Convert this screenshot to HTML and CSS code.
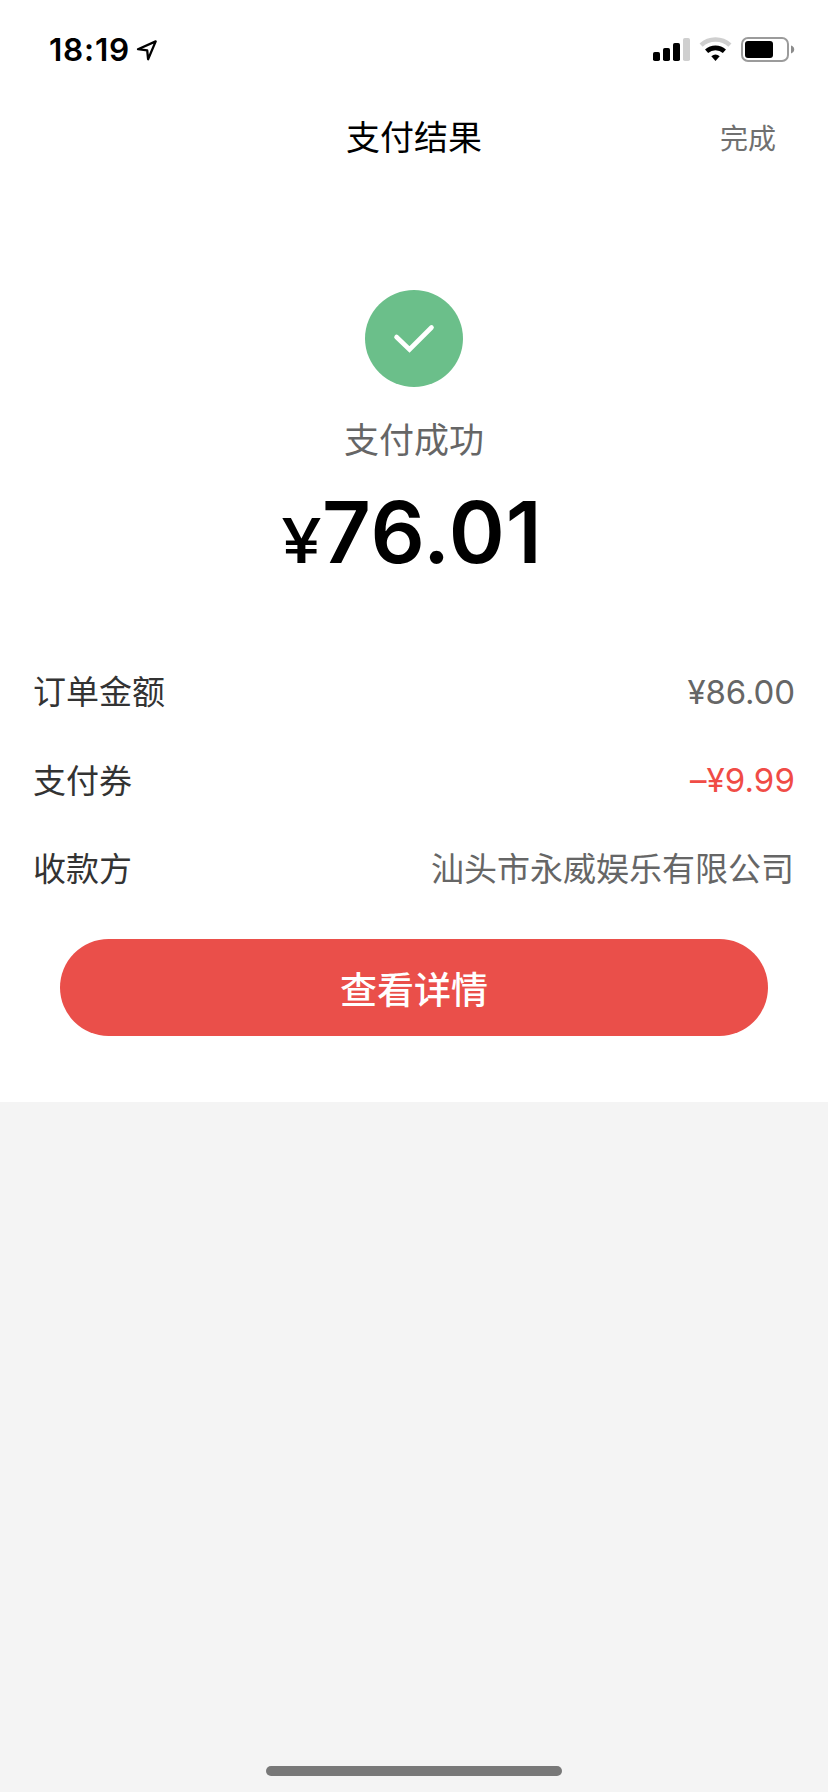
FILE: index.html
```html
<!DOCTYPE html>
<html lang="zh-CN">
<head>
<meta charset="utf-8">
<title>支付结果</title>
<link rel="stylesheet" href="styles.css">
</head>
<body>
<main class="sheet">
  <div class="status-bar">
    <div class="status-left">
      <span class="time">18:19</span>
      <svg class="location" width="24" height="24" viewBox="0 0 24 24"><path d="M3 11.2 20.7 3.4 13.1 21.2 12.2 12.4Z" fill="none" stroke="#000" stroke-width="2.3" stroke-linejoin="round"/></svg>
    </div>
    <svg class="status-icons" width="144" height="26" viewBox="0 0 144 26">
      <rect x="0" y="15" width="7" height="9" rx="1.8"/>
      <rect x="10" y="11" width="7" height="13" rx="1.8"/>
      <rect x="20" y="6" width="7" height="18" rx="1.8"/>
      <rect x="30" y="1" width="7" height="23" rx="1.8" fill="#cfcfcf"/>
      <path d="M48.1 8.2a21 21 0 0 1 28.8 0" fill="none" stroke="#cfcfcf" stroke-width="4.6"/>
      <path d="M53.6 14.3a13.2 13.2 0 0 1 17.8 0" fill="none" stroke="#000" stroke-width="4.6"/>
      <path d="M58.3 19.3a6.5 6.5 0 0 1 8.4 0L62.5 24Z"/>
      <rect x="89" y="1" width="46" height="23" rx="6" fill="#fff" stroke="#9b9b9b" stroke-width="2"/>
      <rect x="92" y="4" width="28" height="17" rx="3"/>
      <path d="M138 8.6c2 .6 3.2 2 3.2 3.9s-1.2 3.3-3.2 3.9Z" fill="#8c8c8c"/>
    </svg>
  </div>
  <header class="nav">
    <h1 class="nav-title">支付结果</h1>
    <a class="nav-done">完成</a>
  </header>
  <section class="result">
    <svg class="success" width="98" height="97" viewBox="0 0 98 97"><ellipse cx="49" cy="48.5" rx="49" ry="48.5" fill="#6bbf8a"/><path d="M31.5 47 44.5 59.5 66.5 37.5" fill="none" stroke="#fff" stroke-width="4.6" stroke-linecap="round" stroke-linejoin="miter"/></svg>
    <p class="result-text">支付成功</p>
    <p class="amount"><span class="currency">¥</span><span class="figure">76.01</span></p>
  </section>
  <dl class="details">
    <div class="row"><dt>订单金额</dt><dd class="money">¥86.00</dd></div>
    <div class="row"><dt>支付券</dt><dd class="money discount">–¥9.99</dd></div>
    <div class="row"><dt>收款方</dt><dd>汕头市永威娱乐有限公司</dd></div>
  </dl>
  <button class="detail-button" type="button">查看详情</button>
</main>
<div class="home-indicator"></div>
</body>
</html>
```
FILE: styles.css
```css
* { box-sizing: border-box; margin: 0; padding: 0; }
body {
  display: flex;
  flex-direction: column;
  justify-content: space-between;
  align-items: center;
  height: 1792px;
  padding-bottom: 16px;
  background: #f4f4f4;
  font-family: Inter, "Noto Sans CJK SC", sans-serif;
  color: #000;
}
.sheet {
  display: flex;
  flex-direction: column;
  width: 828px;
  height: 1102px;
  background: #fff;
}
.status-bar {
  display: flex;
  justify-content: space-between;
  align-items: center;
  height: 100px;
  padding: 0 31px 0 49px;
}
.status-left { display: flex; align-items: center; gap: 5px; }
.time { font-size: 31.5px; font-weight: 600; line-height: 40px; letter-spacing: 0.8px; }
.nav {
  display: grid;
  grid-template-columns: 1fr auto 1fr;
  align-items: center;
  height: 76px;
  padding-right: 52px;
  padding-left: 52px;
}
.nav-title { grid-column: 2; font-size: 34px; font-weight: 400; line-height: 50px; }
.nav-done { justify-self: end; padding-top: 2px; font-size: 28px; line-height: 42px; color: #707070; }
.result { display: flex; flex-direction: column; align-items: center; padding-top: 114px; }
.result-text { margin-top: 27px; font-size: 35px; line-height: 52px; color: #666; }
.amount { display: flex; align-items: baseline; margin-top: 14px; padding-left: 2px; line-height: 106px; }
.currency { font-size: 62px; font-weight: 500; transform: scaleX(1.17); transform-origin: right; }
.figure { font-size: 85px; font-weight: 600; letter-spacing: 0.9px; }
.details { display: flex; flex-direction: column; padding: 52px 34px 0 33px; }
.row { display: flex; justify-content: space-between; align-items: center; height: 88.5px; font-size: 33px; }
.row dt { color: #333; }
.row dd { color: #666; }
.row .money { margin-right: -1px; padding-top: 3px; font-weight: 400; letter-spacing: -0.1px; }
.row .discount { color: #f04c46; letter-spacing: 0.1px; }
.detail-button {
  height: 97px;
  margin: 27px 60px 0;
  padding-top: 7px;
  border: 0;
  border-radius: 48.5px;
  background: #ea4f4a;
  color: #fff;
  font: 500 37px/54px Inter, "Noto Sans CJK SC", sans-serif;
}
.home-indicator { width: 296px; height: 10px; border-radius: 5px; background: #787878; }
```
